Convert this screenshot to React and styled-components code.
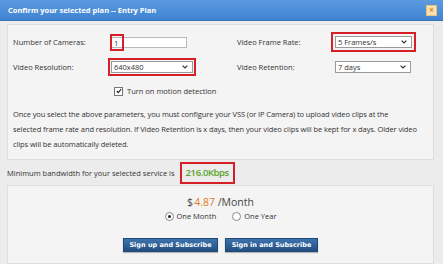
import styled, { createGlobalStyle } from "styled-components";

const Global = createGlobalStyle`
  html, body { margin: 0; padding: 0; background: #ececec; }
  body { font-family: "Open Sans", "DejaVu Sans", sans-serif; color: #333; }
`;

const Dialog = styled.div`
  width: 443px;
  height: 264px;
  background: #ececec;
  overflow: hidden;
  display: flex;
  flex-direction: column;
`;

const TitleBar = styled.div`
  height: 20px;
  flex: none;
  background: linear-gradient(#5b9be0, #3f83d2);
  border-bottom: 1px solid #3573bd;
  display: flex;
  align-items: center;
  justify-content: space-between;
  padding: 0 6px 0 8px;
  color: #fff;
  font-size: 7.5px;
  font-weight: 700;
`;

const CloseBtn = styled.span`
  width: 9px;
  height: 9px;
  background: #f6e2b3;
  border: 1px solid #e9c277;
  display: flex;
  align-items: center;
  justify-content: center;
  color: #e07b10;
  font-size: 8px;
  font-weight: 700;
  line-height: 1;
`;

const Body = styled.div`
  padding: 3px 9px 0 7px;
  display: flex;
  flex-direction: column;
`;

const Panel = styled.div`
  background: #f4f4f4;
  border: 1px solid #dedede;
  padding: ${(p) => p.$pad};
`;

const Grid = styled.div`
  display: grid;
  grid-template-columns: 98px 126px 98px 1fr;
  row-gap: 13px;
  align-items: center;
  font-size: 7.5px;
`;

const Label = styled.span`
  color: #333;
`;

const Highlight = styled.span`
  display: inline-flex;
  outline: 2px solid #d42026;
  outline-offset: ${(p) => p.$off || "2px"};
`;

const TextInput = styled.div`
  position: relative;
  width: 76px;
  height: 11px;
  background: #fff;
  border: 1px solid #b7b7b7;
  font-size: 7.5px;
  line-height: 11px;
  padding-left: 2px;
  box-sizing: border-box;
`;

const CamMark = styled.span`
  position: absolute;
  left: -2px;
  top: -4px;
  width: 14px;
  height: 17px;
  border: 2px solid #d42026;
  box-sizing: border-box;
`;

const Select = styled.div`
  width: ${(p) => p.$w}px;
  height: 12px;
  background: #fff;
  border: 1px solid #9a9a9a;
  box-sizing: border-box;
  display: flex;
  align-items: center;
  justify-content: space-between;
  padding: 0 4px 0 2px;
  font-size: 7.5px;
`;

const Cell = styled.div`
  display: flex;
  align-items: center;
`;

const CheckRow = styled.div`
  display: flex;
  align-items: center;
  gap: 4px;
  padding-left: 101px;
  margin-top: 13px;
  font-size: 7.5px;
`;

const Box = styled.span`
  width: 7px;
  height: 7px;
  border: 1px solid #777;
  background: #fff;
  display: flex;
  align-items: center;
  justify-content: center;
`;

const Para = styled.p`
  margin: 11px 0 0;
  font-size: 7.5px;
  line-height: 15px;
  letter-spacing: -0.1px;
  color: #333;
  white-space: nowrap;
`;

const Bandwidth = styled.div`
  display: flex;
  align-items: center;
  height: 25px;
  font-size: 7.5px;
  gap: 7px;
`;

const Kbps = styled.span`
  color: #59a32a;
  font-weight: 600;
  font-size: 9.5px;
  letter-spacing: -0.4px;
  outline: 2px solid #d42026;
  outline-offset: 0;
  padding: 3px 4px;
  line-height: 12px;
`;

const Price = styled.div`
  text-align: center;
  font-size: 10.5px;
  color: #444;
  line-height: 14px;
`;

const Amount = styled.span`
  color: #e57d1e;
  margin-left: 1px;
`;

const Radios = styled.div`
  display: flex;
  justify-content: center;
  gap: 16px;
  font-size: 7.5px;
  margin-top: 2px;
`;

const RadioItem = styled.label`
  display: flex;
  align-items: center;
  gap: 3px;
`;

const Dot = styled.span`
  width: 7px;
  height: 7px;
  border-radius: 50%;
  border: 1px solid #888;
  background: #fff;
  display: flex;
  align-items: center;
  justify-content: center;
  &::after {
    content: "";
    width: 3px;
    height: 3px;
    border-radius: 50%;
    background: ${(p) => (p.$on ? "#222" : "transparent")};
  }
`;

const Buttons = styled.div`
  display: flex;
  justify-content: center;
  gap: 7px;
  margin-top: 17px;
`;

const Button = styled.button`
  flex: none;
  box-sizing: border-box;
  width: ${(p) => p.$w}px;
  height: 14px;
  border: 1px solid #1f4a78;
  background: linear-gradient(#3d73ad, #234f82);
  color: #fff;
  font-family: "DejaVu Sans", Verdana, sans-serif;
  font-weight: 700;
  font-size: 6.5px;
  padding: 0;
  box-shadow: 0 1px 1px rgba(0, 0, 0, 0.25);
`;

const Chevron = () => (
  <svg width="6" height="4" viewBox="0 0 6 4">
    <path d="M0.6 0.6 L3 3 L5.4 0.6" fill="none" stroke="#333" strokeWidth="1.2" />
  </svg>
);

const Check = () => (
  <svg width="6" height="6" viewBox="0 0 6 6">
    <path d="M0.8 3 L2.4 4.6 L5.2 1" fill="none" stroke="#222" strokeWidth="1.1" />
  </svg>
);

export default function App() {
  return (
    <Dialog>
      <Global />
      <TitleBar>
        Confirm your selected plan -- Entry Plan
        <CloseBtn>×</CloseBtn>
      </TitleBar>
      <Body>
        <Panel $pad="11px 6px 7px 5px">
          <Grid>
            <Label>Number of Cameras:</Label>
            <Cell>
              <TextInput>
                <CamMark />1
              </TextInput>
            </Cell>
            <Label>Video Frame Rate:</Label>
            <Cell>
              <Highlight $off="2px">
                <Select $w={77}>
                  5 Frames/s <Chevron />
                </Select>
              </Highlight>
            </Cell>
            <Label>Video Resolution:</Label>
            <Cell>
              <Highlight $off="1px">
                <Select $w={82}>
                  640x480 <Chevron />
                </Select>
              </Highlight>
            </Cell>
            <Label>Video Retention:</Label>
            <Cell>
              <Select $w={76}>
                7 days <Chevron />
              </Select>
            </Cell>
          </Grid>
          <CheckRow>
            <Box>
              <Check />
            </Box>
            Turn on motion detection
          </CheckRow>
          <Para>
            Once you select the above parameters, you must configure your VSS (or IP Camera) to upload video clips at the
            <br />
            selected frame rate and resolution. If Video Retention is x days, then your video clips will be kept for x days. Older video
            <br />
            clips will be automatically deleted.
          </Para>
        </Panel>
        <Bandwidth>
          Minimum bandwidth for your selected service is
          <Kbps>216.0Kbps</Kbps>
        </Bandwidth>
        <Panel $pad="9px 0 11px">
          <Price>
            $<Amount>4.87</Amount> /Month
          </Price>
          <Radios>
            <RadioItem>
              <Dot $on /> One Month
            </RadioItem>
            <RadioItem>
              <Dot /> One Year
            </RadioItem>
          </Radios>
          <Buttons>
            <Button $w={95}>Sign up and Subscribe</Button>
            <Button $w={93}>Sign in and Subscribe</Button>
          </Buttons>
        </Panel>
      </Body>
    </Dialog>
  );
}
